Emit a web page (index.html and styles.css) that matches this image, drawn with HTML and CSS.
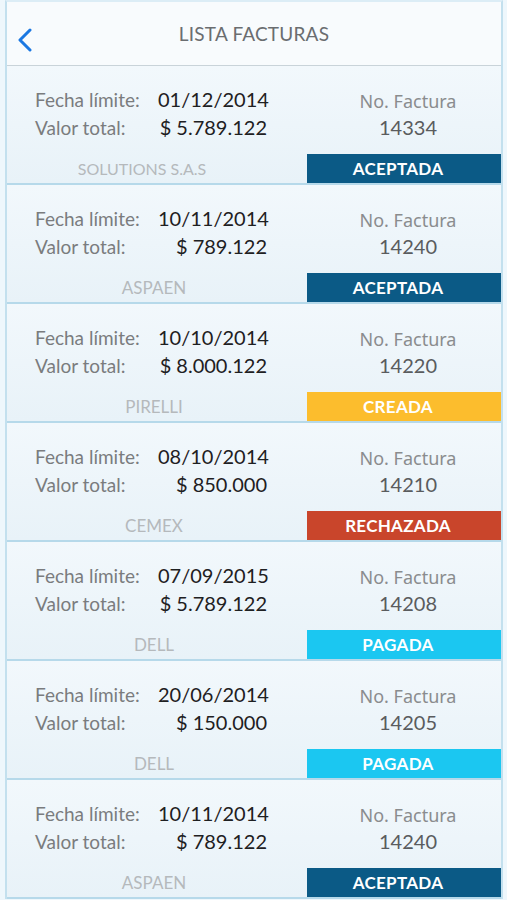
FILE: index.html
```html
<!DOCTYPE html>
<html>
<head>
    <title>Lista Facturas</title>
    <link rel="stylesheet" href="styles.css">
</head>
<body>
    <div class="screen">
        <header class="topbar">
            <svg class="back" width="16" height="24" viewBox="0 0 16 24">
                <path d="M13 2 L3 12 L13 22" fill="none" stroke="#1b78e2" stroke-width="3" stroke-linecap="round" stroke-linejoin="round"/>
            </svg>
            <h1>LISTA FACTURAS</h1>
        </header>

        <div class="card">
            <div class="info">
                <span class="label">Fecha límite:</span><span class="value">01/12/2014</span>
                <span class="label">Valor total:</span><span class="value">$ 5.789.122</span>
            </div>
            <div class="number"><span class="no">No. Factura</span><span class="num">14334</span></div>
            <div class="company small">SOLUTIONS S.A.S</div>
            <div class="status aceptada">ACEPTADA</div>
        </div>

        <div class="card">
            <div class="info">
                <span class="label">Fecha límite:</span><span class="value">10/11/2014</span>
                <span class="label">Valor total:</span><span class="value">$ 789.122</span>
            </div>
            <div class="number"><span class="no">No. Factura</span><span class="num">14240</span></div>
            <div class="company">ASPAEN</div>
            <div class="status aceptada">ACEPTADA</div>
        </div>

        <div class="card">
            <div class="info">
                <span class="label">Fecha límite:</span><span class="value">10/10/2014</span>
                <span class="label">Valor total:</span><span class="value">$ 8.000.122</span>
            </div>
            <div class="number"><span class="no">No. Factura</span><span class="num">14220</span></div>
            <div class="company">PIRELLI</div>
            <div class="status creada">CREADA</div>
        </div>

        <div class="card">
            <div class="info">
                <span class="label">Fecha límite:</span><span class="value">08/10/2014</span>
                <span class="label">Valor total:</span><span class="value">$ 850.000</span>
            </div>
            <div class="number"><span class="no">No. Factura</span><span class="num">14210</span></div>
            <div class="company">CEMEX</div>
            <div class="status rechazada">RECHAZADA</div>
        </div>

        <div class="card">
            <div class="info">
                <span class="label">Fecha límite:</span><span class="value">07/09/2015</span>
                <span class="label">Valor total:</span><span class="value">$ 5.789.122</span>
            </div>
            <div class="number"><span class="no">No. Factura</span><span class="num">14208</span></div>
            <div class="company">DELL</div>
            <div class="status pagada">PAGADA</div>
        </div>

        <div class="card">
            <div class="info">
                <span class="label">Fecha límite:</span><span class="value">20/06/2014</span>
                <span class="label">Valor total:</span><span class="value">$ 150.000</span>
            </div>
            <div class="number"><span class="no">No. Factura</span><span class="num">14205</span></div>
            <div class="company">DELL</div>
            <div class="status pagada">PAGADA</div>
        </div>

        <div class="card">
            <div class="info">
                <span class="label">Fecha límite:</span><span class="value">10/11/2014</span>
                <span class="label">Valor total:</span><span class="value">$ 789.122</span>
            </div>
            <div class="number"><span class="no">No. Factura</span><span class="num">14240</span></div>
            <div class="company">ASPAEN</div>
            <div class="status aceptada">ACEPTADA</div>
        </div>
    </div>
</body>
</html>
```

FILE: styles.css
```css
body {
    margin: 0;
    background-color: #eef7fc;
    font-family: Lato, "Open Sans", sans-serif;
    overflow: hidden;
}

.screen {
    margin: 0 4px 0 5px;
    border-left: 2px solid #c3e0ee;
    border-right: 2px solid #c3e0ee;
    border-top: 2px solid #dcedf6;
}

.topbar {
    height: 63px;
    background-color: #f8fbfd;
    border-bottom: 1px solid #c9d3d9;
    display: flex;
    align-items: center;
    justify-content: center;
    position: relative;
}

.back {
    position: absolute;
    left: 10px;
    top: 26px;
}

h1 {
    margin: 0;
    font-size: 19px;
    font-weight: normal;
    color: #6a6d70;
    letter-spacing: 0.2px;
}

.card {
    display: grid;
    grid-template-columns: 300px 1fr;
    grid-template-rows: 88px 29px;
    background: linear-gradient(#f2f8fc, #e8f2f8);
    border-bottom: 2px solid #b6d9ea;
}

.info {
    display: grid;
    grid-template-columns: 123px 109px;
    grid-auto-rows: 28px;
    align-items: center;
    padding: 19px 0 0 28px;
}

.label {
    font-size: 19px;
    color: #7a7c7e;
}

.value {
    font-size: 20px;
    color: #1e2022;
    text-align: right;
    white-space: nowrap;
}

.number {
    display: flex;
    flex-direction: column;
    align-items: center;
    padding: 22px 0 0 8px;
    color: #7d7f81;
}

.no {
    font-family: "Noto Sans", sans-serif;
    font-size: 18px;
    line-height: 26px;
    color: #8a8c8e;
}

.num {
    font-size: 20px;
    line-height: 26px;
    color: #5a5c5e;
}

.company {
    display: flex;
    align-items: center;
    justify-content: center;
    padding-right: 6px;
    font-size: 17px;
    color: #b5b9bc;
}

.company.small {
    font-size: 16px;
    padding-right: 30px;
}

.status {
    display: flex;
    align-items: center;
    justify-content: center;
    padding-right: 12px;
    font-size: 17px;
    font-weight: bold;
    color: #fff;
    letter-spacing: 0.3px;
}

.aceptada {
    background-color: #0b5a86;
}

.creada {
    background-color: #fcbd2d;
}

.rechazada {
    background-color: #c9452b;
}

.pagada {
    background-color: #1bc7f1;
}
```
